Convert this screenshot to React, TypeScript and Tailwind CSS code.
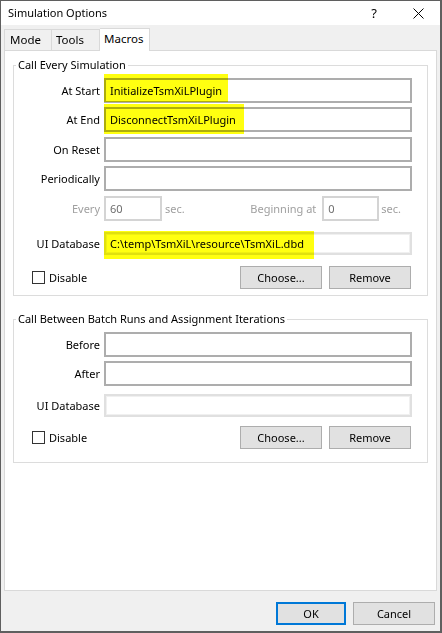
import React from "react";

type Variant = "normal" | "disabled" | "readonly";

function Box({
  text = "",
  variant = "normal",
  className = "",
  hl = "",
}: {
  text?: string;
  variant?: Variant;
  className?: string;
  hl?: string;
}) {
  const skin =
    variant === "normal"
      ? "border-2 border-[#adadad] text-black"
      : variant === "disabled"
      ? "border-2 border-[#d4d4d4] text-[#6d6d6d]"
      : "border-2 border-[#e0e0e0] shadow-[inset_0_0_0_1px_#f0f0f0] text-black";
  return (
    <div className={`relative bg-white flex items-center pl-[4px] whitespace-nowrap ${skin} ${className}`}>
      {hl && <span className={`absolute left-[-2px] bg-[#ffff10] mix-blend-multiply ${hl}`} />}
      <span className="relative">{text}</span>
    </div>
  );
}

function Row({
  label,
  children,
  className = "",
  muted = false,
}: {
  label: string;
  children: React.ReactNode;
  className?: string;
  muted?: boolean;
}) {
  return (
    <div className={`flex items-center ${className}`}>
      <div className={`w-[86px] text-right whitespace-nowrap ${muted ? "text-[#a0a0a0]" : ""}`}>{label}</div>
      <div className="ml-[4px] w-[308px] h-full">{children}</div>
    </div>
  );
}

function Btn({ children, primary = false }: { children: React.ReactNode; primary?: boolean }) {
  return (
    <div
      className={`h-[23px] flex items-center justify-center bg-[#e1e1e1] border ${
        primary ? "border-[#0078d7] shadow-[inset_0_0_0_1px_#0078d7] w-[70px]" : "border-[#adadad] w-[82px]"
      }`}
    >
      {children}
    </div>
  );
}

function Footer2({ className = "" }: { className?: string }) {
  return (
    <div className={`flex items-center h-[23px] ${className}`}>
      <div className="ml-[18px] w-[13px] h-[13px] border border-[#333333] bg-white" />
      <span className="ml-[4px]">Disable</span>
      <div className="ml-auto mr-[16px] flex gap-[7px]">
        <Btn>Choose...</Btn>
        <Btn>Remove</Btn>
      </div>
    </div>
  );
}

export default function App() {
  return (
    <div className="w-[442px] h-[633px] bg-[#f0f0f0] border-l border-t border-r-2 border-b-2 border-[#5f5f5f] flex flex-col font-['Noto_Sans',sans-serif] text-[11px] leading-[16px] text-black overflow-hidden">
      {/* Title bar */}
      <div className="h-[24px] shrink-0 bg-white flex items-center pl-[7px] text-[11px]">
        <span>Simulation Options</span>
        <div className="ml-auto flex items-center h-full">
          <div className="w-[44px] flex justify-center text-[13px]">?</div>
          <div className="w-[44px] flex justify-center">
            <svg width="11" height="11" viewBox="0 0 11 11">
              <path d="M0.5 0.5 L10.5 10.5 M10.5 0.5 L0.5 10.5" stroke="#000" strokeWidth="1" fill="none" />
            </svg>
          </div>
        </div>
      </div>

      {/* Tabs */}
      <div className="h-[25px] shrink-0 flex items-end pl-[3px] text-[11.5px]">
        <div className="w-[48px] h-[21px] border border-b-0 border-[#d9d9d9] flex items-center pl-[5px]">Mode</div>
        <div className="w-[48px] h-[21px] border border-b-0 border-l-0 border-[#d9d9d9] flex items-center pl-[4px]">Tools</div>
        <div className="relative z-10 -mb-px w-[50px] h-[23px] bg-white border border-b-0 border-l-0 border-[#d9d9d9] flex items-center pl-[4px] pb-[2px]">
          Macros
        </div>
      </div>

      {/* Panel */}
      <div className="flex-1 bg-white border border-[#d9d9d9] ml-[3px] mr-[3px] pt-[6px] px-[8px]">
        <fieldset className="border border-[#dcdcdc] pb-[6px]">
          <legend className="ml-[2px] px-[2px] leading-[16px]">Call Every Simulation</legend>
          <div className="flex flex-col pt-[5px]">
            <Row label="At Start" className="h-[25px]">
              <Box text="InitializeTsmXiLPlugin" className="h-full" hl="-top-[6px] w-[124px] h-[28px]" />
            </Row>
            <Row label="At End" className="h-[25px] mt-[4px]">
              <Box text="DisconnectTsmXiLPlugin" className="h-full" hl="-top-[5px] w-[140px] h-[30px]" />
            </Row>
            <Row label="On Reset" className="h-[25px] mt-[5px]">
              <Box className="h-full" />
            </Row>
            <Row label="Periodically" className="h-[25px] mt-[4px]">
              <Box className="h-full" />
            </Row>
            <Row label="Every" muted className="h-[25px] mt-[5px]">
              <div className="flex items-center h-full pr-[11px] text-[#a0a0a0]">
                <Box text="60" variant="disabled" className="h-full w-[58px]" />
                <span className="ml-[3px]">sec.</span>
                <span className="ml-auto">Beginning at</span>
                <Box text="0" variant="disabled" className="h-full w-[57px] ml-[6px]" />
                <span className="ml-[2px]">sec.</span>
              </div>
            </Row>
            <Row label="UI Database" className="h-[23px] mt-[11px]">
              <Box
                text="C:\temp\TsmXiL\resource\TsmXiL.dbd"
                variant="readonly"
                className="h-full"
                hl="-top-[3px] w-[210px] h-[28px]"
              />
            </Row>
            <Footer2 className="mt-[11px]" />
          </div>
        </fieldset>

        <fieldset className="border border-[#dcdcdc] pb-[13px] mt-[15px]">
          <legend className="ml-[2px] px-[2px] leading-[16px]">Call Between Batch Runs and Assignment Iterations</legend>
          <div className="flex flex-col pt-[5px]">
            <Row label="Before" className="h-[25px]">
              <Box className="h-full" />
            </Row>
            <Row label="After" className="h-[25px] mt-[4px]">
              <Box className="h-full" />
            </Row>
            <Row label="UI Database" className="h-[23px] mt-[8px]">
              <Box variant="readonly" className="h-full" />
            </Row>
            <Footer2 className="mt-[9px]" />
          </div>
        </fieldset>
      </div>

      {/* Footer */}
      <div className="h-[40px] shrink-0 flex items-start justify-end pt-[11px] pr-[5px] gap-[7px]">
        <Btn primary>OK</Btn>
        <Btn>
          <span className="w-[68px] text-center">Cancel</span>
        </Btn>
      </div>
    </div>
  );
}
